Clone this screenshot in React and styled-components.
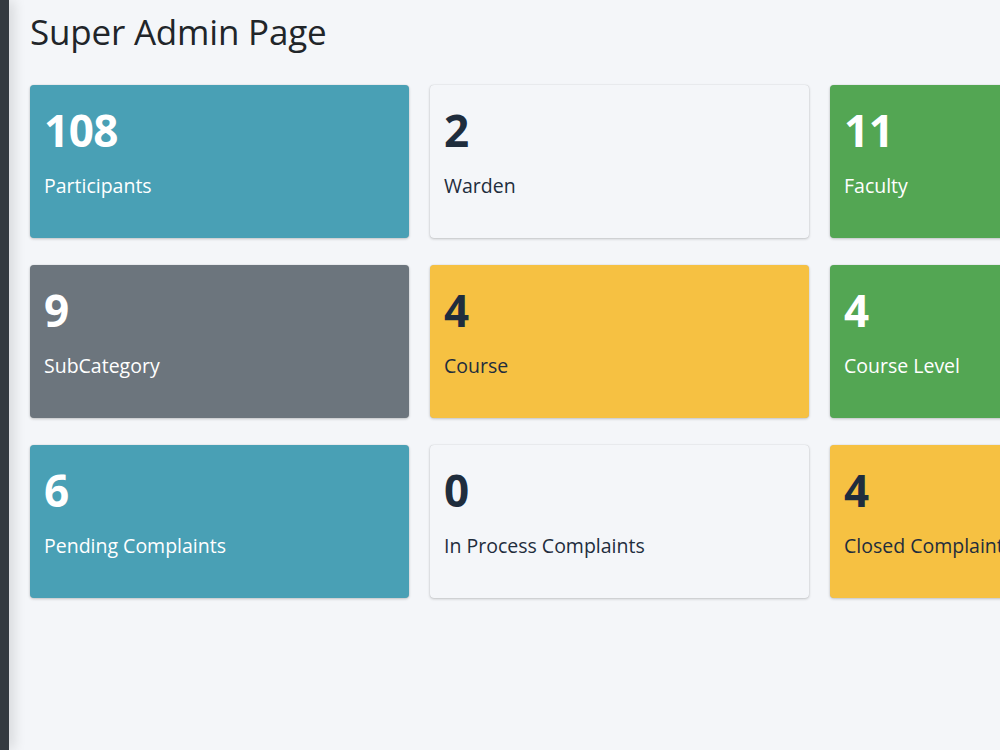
import React from 'react';
import styled, { createGlobalStyle } from 'styled-components';

const GlobalStyle = createGlobalStyle`
  html, body {
    margin: 0;
    padding: 0;
    background: #f4f6f9;
    font-family: "Open Sans", "Liberation Sans", sans-serif;
    overflow: hidden;
  }
`;

const Layout = styled.div`
  display: flex;
  width: 1000px;
  height: 750px;
  overflow: hidden;
`;

const SideStrip = styled.div`
  flex: 0 0 9px;
  background: #343a40;
  box-shadow: 3px 0 14px rgba(0, 0, 0, 0.18);
  z-index: 1;
`;

const Content = styled.main`
  flex: 1;
  padding: 10px 0 0 21px;
  min-width: 0;
`;

const Title = styled.h1`
  margin: 0 0 31px;
  font-size: 35px;
  font-weight: 400;
  line-height: 44px;
  color: #212529;
  letter-spacing: -0.2px;
`;

const Grid = styled.div`
  display: grid;
  grid-template-columns: repeat(3, 379px);
  column-gap: 21px;
  row-gap: 27px;
`;

const palette = {
  info: { bg: '#49a0b5', fg: '#ffffff' },
  light: { bg: '#f4f6f9', fg: '#1f2d3d' },
  success: { bg: '#53a653', fg: '#ffffff' },
  secondary: { bg: '#6c757d', fg: '#ffffff' },
  warning: { bg: '#f6c142', fg: '#1f2d3d' },
};

const Card = styled.div`
  height: 153px;
  box-sizing: border-box;
  padding: 21px 14px;
  border-radius: 4px;
  background: ${(p) => palette[p.$tone].bg};
  color: ${(p) => palette[p.$tone].fg};
  box-shadow: 0 0 1px rgba(0, 0, 0, 0.2), 0 1px 3px rgba(0, 0, 0, 0.2);
`;

const Count = styled.div`
  font-size: 44px;
  font-weight: 700;
  line-height: 48px;
  letter-spacing: -0.5px;
`;

const Label = styled.div`
  margin-top: 18px;
  font-size: 19.5px;
  line-height: 28px;
  white-space: nowrap;
`;

const stats = [
  { count: 108, label: 'Participants', tone: 'info' },
  { count: 2, label: 'Warden', tone: 'light' },
  { count: 11, label: 'Faculty', tone: 'success' },
  { count: 9, label: 'SubCategory', tone: 'secondary' },
  { count: 4, label: 'Course', tone: 'warning' },
  { count: 4, label: 'Course Level', tone: 'success' },
  { count: 6, label: 'Pending Complaints', tone: 'info' },
  { count: 0, label: 'In Process Complaints', tone: 'light' },
  { count: 4, label: 'Closed Complaints', tone: 'warning' },
];

const App = () => (
  <>
    <GlobalStyle />
    <Layout>
      <SideStrip />
      <Content>
        <Title>Super Admin Page</Title>
        <Grid>
          {stats.map((s) => (
            <Card key={s.label} $tone={s.tone}>
              <Count>{s.count}</Count>
              <Label>{s.label}</Label>
            </Card>
          ))}
        </Grid>
      </Content>
    </Layout>
  </>
);

export default App;
